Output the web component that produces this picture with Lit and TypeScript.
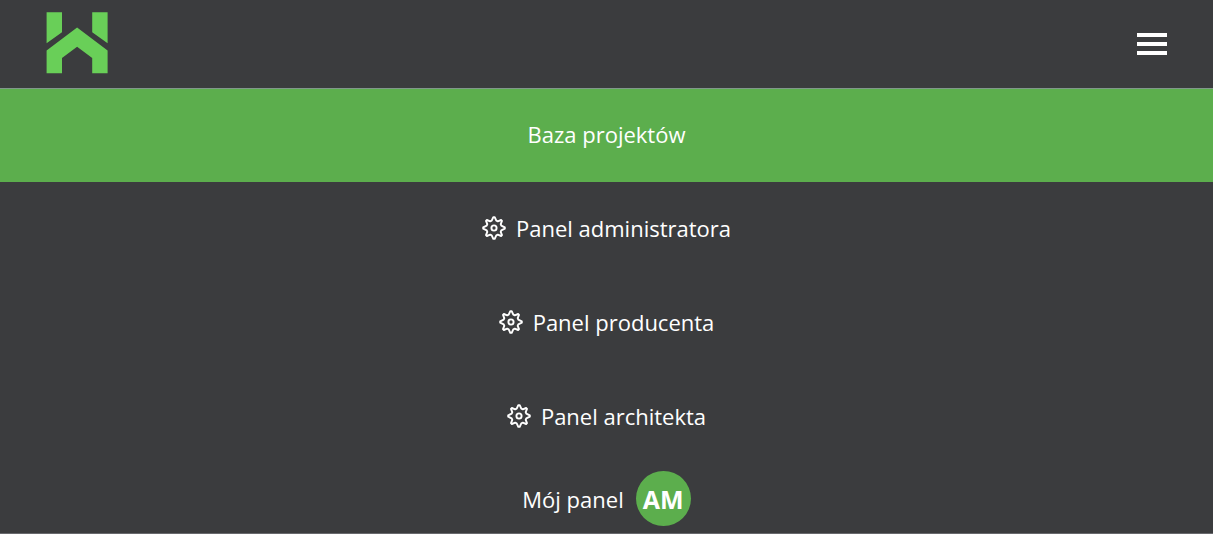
import { LitElement, html, css } from "lit";
import { customElement } from "lit/decorators.js";

@customElement("gear-icon")
class GearIcon extends LitElement {
  static styles = css`
    :host { display: block; width: 24px; height: 24px; }
    svg { display: block; width: 100%; height: 100%; }
  `;
  render() {
    return html`<svg viewBox="0 0 24 24" fill="none" stroke="#fff" stroke-width="1.9" stroke-linejoin="round" aria-hidden="true">
      <path d="M11.3 1.2h1.4L14.3 4.7 15.8 5.3 19.1 4 20 4.9 18.7 8.2 19.3 9.7 22.8 11.3v1.4L19.3 14.3 18.7 15.8 20 19.1 19.1 20 15.8 18.7 14.3 19.3 12.7 22.8h-1.4L9.7 19.3 8.2 18.7 4.9 20 4 19.1 5.3 15.8 4.7 14.3 1.2 12.7v-1.4L4.7 9.7 5.3 8.2 4 4.9 4.9 4 8.2 5.3 9.7 4.7Z"/>
      <circle cx="12" cy="12" r="2.6"/>
    </svg>`;
  }
}

@customElement("app-root")
class AppRoot extends LitElement {
  static styles = css`
    :host {
      display: block;
      min-height: 100vh;
      background: #3b3c3e;
      color: #fff;
      font: 22px/30px "Open Sans", "Noto Sans", sans-serif;
    }
    header {
      display: flex;
      align-items: center;
      justify-content: space-between;
      height: 88px;
      padding: 0 46px;
      box-sizing: border-box;
    }
    .brand { display: block; margin-bottom: 2px; }
    .brand svg { display: block; width: 62px; height: 62px; }
    .toggle {
      display: flex;
      flex-direction: column;
      gap: 5px;
      width: 30px;
      padding: 0;
      border: 0;
      background: none;
      cursor: pointer;
    }
    .bar { height: 4px; background: #fff; }
    nav { border-top: 1px solid #80988a; border-bottom: 1px solid #68696d; }
    ul { margin: 0; padding: 0; list-style: none; }
    .link {
      display: flex;
      align-items: center;
      justify-content: center;
      gap: 10px;
      padding: 31px 0 33px;
      color: inherit;
      text-decoration: none;
    }
    .active { padding: 30px 0 33px; background: #5cae4d; }
    .account { gap: 12px; padding: 7px 0; }
    .avatar {
      display: grid;
      place-items: center;
      width: 55px;
      height: 55px;
      border-radius: 50%;
      background: #5cae4d;
      font-size: 25px;
      font-weight: 700;
    }
  `;

  private panels = ["Panel administratora", "Panel producenta", "Panel architekta"];

  render() {
    return html`
      <header>
        <a class="brand" href="#" aria-label="Strona główna">
          <svg viewBox="0 0 62 62" fill="#69cf58" aria-hidden="true">
            <path d="M.6.3H16V20.3L.6 31.2ZM46.2.3H61.6V31.2L46.2 20.3ZM31.1 15.5 61.6 38.4V61.3H46.2V46L31.1 34.7 16 46V61.3H.6V38.4Z"/>
          </svg>
        </a>
        <button class="toggle" aria-label="Menu" aria-expanded="true">
          <span class="bar"></span><span class="bar"></span><span class="bar"></span>
        </button>
      </header>
      <nav>
        <ul>
          <li><a class="link active" href="#">Baza projektów</a></li>
          ${this.panels.map((name) => html`<li><a class="link" href="#"><gear-icon></gear-icon>${name}</a></li>`)}
          <li><a class="link account" href="#">Mój panel<span class="avatar">AM</span></a></li>
        </ul>
      </nav>
    `;
  }
}
